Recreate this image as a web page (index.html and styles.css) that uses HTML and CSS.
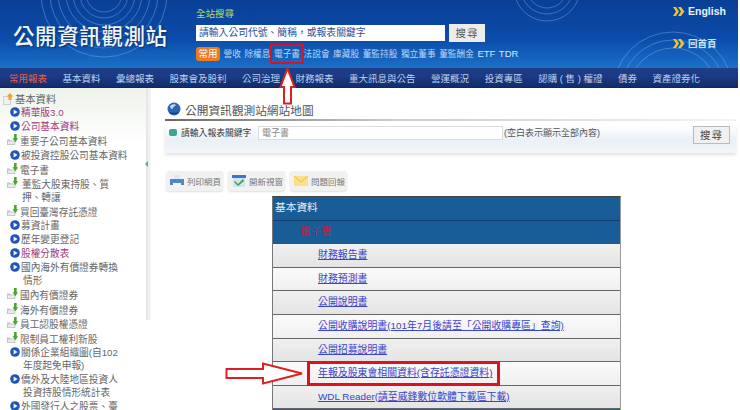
FILE: index.html
```html
<!DOCTYPE html>
<html lang="zh-Hant">
<head>
<meta charset="utf-8">
<title>公開資訊觀測站</title>
<link rel="stylesheet" href="styles.css">
</head>
<body>
<svg class="defs" width="0" height="0" aria-hidden="true">
  <symbol id="bullet" viewBox="0 0 10 10">
    <circle cx="5" cy="5" r="4.800" fill="#1f55b8"/>
    <path d="M3.600 2.400l4 2.600-4 2.600z" fill="#f4f8ff"/>
  </symbol>
  <symbol id="folder" viewBox="0 0 14 13">
    <path d="M0 6h3l1 1h5v5H0z" fill="#bfc6c6"/>
    <path d="M1 8h7v3H1z" fill="#e9ebeb"/>
    <path d="M7.600 0h2.800v4.500H12L9 9 6 4.500h1.600z" fill="#4aa52e"/>
  </symbol>
  <symbol id="root" viewBox="0 0 11 13">
    <path d="M0 3h8v9H0z" fill="#cdd3d3"/>
    <path d="M1 4h6v7H1z" fill="#f0f1ee"/>
    <path d="M7 0l3.500 3.500H8.500V7h-3V3.500H3.500z" fill="#eda52d"/>
  </symbol>
  <symbol id="chev" viewBox="0 0 12 9">
    <path d="M0 0h3l3 4.500L3 9H0l3-4.500z M5 0h3l3.500 4.500L8 9H5l3-4.500z" fill="#f1c232"/>
  </symbol>
</svg>
<header class="top">
  <svg class="swirl" width="740" height="68" aria-hidden="true">
    <g fill="none" stroke="#8dbbec" stroke-opacity=".4">
      <circle cx="104" cy="-6" r="18"/><circle cx="104" cy="-6" r="24"/><circle cx="104" cy="-6" r="31"/><circle cx="104" cy="-6" r="38"/><circle cx="104" cy="-6" r="46"/><circle cx="104" cy="-6" r="54"/><circle cx="104" cy="-6" r="63"/>
      <circle cx="547" cy="-12" r="20"/><circle cx="547" cy="-12" r="26"/><circle cx="547" cy="-12" r="33"/>
      <circle cx="673" cy="92" r="44"/><circle cx="673" cy="92" r="52"/><circle cx="673" cy="92" r="60"/>
    </g>
  </svg>
  <div class="brand">公開資訊觀測站</div>
  <div class="site-search">
    <div class="search-label">全站搜尋</div>
    <div class="search-row">
      <div class="search-input">請輸入公司代號、簡稱，或報表關鍵字</div>
      <div class="search-btn">搜尋</div>
    </div>
    <div class="quick">
      <span class="badge">常用</span>
      <span>營收</span><span>除權息</span><span>電子書</span><span>法說會</span><span>庫藏股</span><span>董監持股</span><span>獨立董事</span><span>董監酬金</span><span class="latin">ETF</span><span class="latin">TDR</span>
    </div>
  </div>
  <div class="top-links">
    <div class="top-link english"><svg class="chev"><use href="#chev"/></svg>English</div>
    <div class="top-link"><svg class="chev"><use href="#chev"/></svg>回首頁</div>
  </div>
</header>
<nav class="nav">
  <span class="nav-on">常用報表</span><span>基本資料</span><span>彙總報表</span><span>股東會及股利</span><span>公司治理</span><span>財務報表</span><span>重大訊息與公告</span><span>營運概況</span><span>投資專區</span><span>認購 ( 售 ) 權證</span><span>債券</span><span>資產證券化</span>
</nav>
<div class="body">
  <aside class="side">
    <div class="tree-root"><svg class="ic-root"><use href="#root"/></svg>基本資料</div>
    <div class="t b v"><svg class="ic"><use href="#bullet"/></svg><span>精華版3.0</span></div>
    <div class="t b v"><svg class="ic"><use href="#bullet"/></svg><span>公司基本資料</span></div>
    <div class="t f"><svg class="ic-f"><use href="#folder"/></svg><span>重要子公司基本資料</span></div>
    <div class="t b"><svg class="ic"><use href="#bullet"/></svg><span>被投資控股公司基本資料</span></div>
    <div class="t f"><svg class="ic-f"><use href="#folder"/></svg><span>電子書</span></div>
    <div class="t f"><svg class="ic-f"><use href="#folder"/></svg><span class="ind">董監大股東持股、質<br>押、轉讓</span></div>
    <div class="t f"><svg class="ic-f"><use href="#folder"/></svg><span>買回臺灣存託憑證</span></div>
    <div class="t b"><svg class="ic"><use href="#bullet"/></svg><span>募資計畫</span></div>
    <div class="t b"><svg class="ic"><use href="#bullet"/></svg><span>歷年變更登記</span></div>
    <div class="t b v"><svg class="ic"><use href="#bullet"/></svg><span>股權分散表</span></div>
    <div class="t b"><svg class="ic"><use href="#bullet"/></svg><span>國內海外有價證券轉換<br><span class="cont">情形</span></span></div>
    <div class="t f"><svg class="ic-f"><use href="#folder"/></svg><span>國內有價證券</span></div>
    <div class="t f"><svg class="ic-f"><use href="#folder"/></svg><span>海外有價證券</span></div>
    <div class="t f"><svg class="ic-f"><use href="#folder"/></svg><span>員工認股權憑證</span></div>
    <div class="t f"><svg class="ic-f"><use href="#folder"/></svg><span>限制員工權利新股</span></div>
    <div class="t b"><svg class="ic"><use href="#bullet"/></svg><span>關係企業組織圖(自102<br><span class="cont">年度起免申報)</span></span></div>
    <div class="t b"><svg class="ic"><use href="#bullet"/></svg><span>僑外及大陸地區投資人<br><span class="cont">投資持股情形統計表</span></span></div>
    <div class="t b"><svg class="ic"><use href="#bullet"/></svg><span>外國發行人之股票、臺</span></div>
  </aside>
  <div class="split"></div>
  <main class="main">
    <div class="title">
      <svg class="globe" viewBox="0 0 14 14" aria-hidden="true">
        <circle cx="7" cy="7" r="6.500" fill="#2b63b5"/>
        <path d="M3 4c2-2 5-2 6-1-1 2-3 1-3 3S3 7 3 4z" fill="#bcd7f2"/>
        <path d="M2 10c3 3 8 3 10 0-3 1-7 1-10 0z" fill="#0f3d86"/>
      </svg>
      <span>公開資訊觀測站網站地圖</span>
    </div>
    <div class="filter">
      <span class="filter-dot"></span>
      <span class="filter-label">請輸入報表關鍵字</span>
      <div class="filter-input">電子書</div>
      <span class="filter-note">(空白表示顯示全部內容)</span>
      <div class="filter-btn">搜尋</div>
    </div>
    <div class="tools">
      <div class="tool">
        <svg viewBox="0 0 14 12" aria-hidden="true"><path d="M4 0h6v4H4z" fill="#dfe8f5"/><path d="M0 4h14v6H0z" fill="#4f86cf"/><path d="M3 8h8v4H3z" fill="#f4f6fa"/></svg>
        <span>列印網頁</span>
      </div>
      <div class="tool">
        <svg viewBox="0 0 14 12" aria-hidden="true"><path d="M0 0h14v3H0z" fill="#3c78c8"/><path d="M1 3h12v9H1z" fill="#cfe3f5"/><path d="M3 6l3 3 5-5 1 2-6 5-4-4z" fill="#3da63a"/></svg>
        <span>開新視窗</span>
      </div>
      <div class="tool">
        <svg viewBox="0 0 14 12" aria-hidden="true"><path d="M0 1h14v10H0z" fill="#fbe08a"/><path d="M0 1l7 6 7-6" fill="none" stroke="#f2bd3e"/></svg>
        <span>問題回報</span>
      </div>
    </div>
    <div class="sitemap">
      <div class="row head">基本資料</div>
      <div class="row sub">電子書</div>
      <div class="row odd"><a>財務報告書</a></div>
      <div class="row even"><a>財務預測書</a></div>
      <div class="row odd"><a>公開說明書</a></div>
      <div class="row even"><a>公開收購說明書(101年7月後請至「公開收購專區」查詢)</a></div>
      <div class="row odd"><a>公開招募說明書</a></div>
      <div class="row even"><a>年報及股東會相關資料(含存託憑證資料)</a></div>
      <div class="row odd"><a>WDL Reader(請至威鋒數位軟體下載區下載)</a></div>
      <div class="row foot"></div>
    </div>
  </main>
</div>
<div class="mark-box quick-box"></div>
<div class="mark-box report-box"></div>
<svg class="arrow-up" viewBox="0 0 17 38" aria-hidden="true"><path d="M8.500 1.500L15.500 20H12V36.500H5V20H1.500z" fill="#fff" stroke="#e02020" stroke-width="2"/></svg>
<svg class="arrow-right" viewBox="0 0 80 23" aria-hidden="true"><path d="M1.500 7H38V1.500L77 11.500 38 21.500V16H1.500z" fill="#fff" stroke="#e02020" stroke-width="2"/></svg>
</body>
</html>
```
FILE: styles.css
```css
* { box-sizing: border-box; }
html, body { margin: 0; height: 410px; overflow: hidden; background: #fff; }
body { position: relative; width: 740px; font-family: "Liberation Sans", "Noto Sans CJK TC", sans-serif; color: #444; }
.defs { position: absolute; }

.top { position: relative; width: 738px; height: 68px; padding: 0 0 0 13px; display: flex; background: linear-gradient(180deg, #0a3f96 0, #0b4ba8 55%, #1a70c8 100%); overflow: hidden; }
.swirl { position: absolute; left: 0; top: 0; }
.brand { position: relative; z-index: 1; width: 183px; margin-top: 24px; font-size: 21.500px; line-height: 26px; letter-spacing: .6px; font-weight: 500; color: #f2f5f8; text-shadow: 1px 1px 2px #0a2f66; white-space: nowrap; }
.site-search { position: relative; z-index: 1; width: 440px; }
.search-label { margin-top: 8px; height: 17px; font-size: 9.500px; line-height: 11px; color: #bcdc62; }
.search-row { display: flex; gap: 4px; }
.search-input { width: 249px; height: 16px; background: #fff; font-size: 9.800px; line-height: 16px; padding-left: 3px; color: #2c4f9c; white-space: nowrap; }
.search-btn { width: 36px; height: 18px; margin-top: -1px; background: #ececec; color: #555; text-align: center; font-size: 10.500px; line-height: 18px; letter-spacing: 1px; }
.quick { display: flex; align-items: center; gap: 3.500px; margin-top: 5px; font-size: 8.700px; line-height: 14px; color: #b7d6f6; white-space: nowrap; }
.latin { font-size: 9.500px; color: #d6e8fa; }
.badge { width: 24px; height: 14px; background: #ee7a1f; color: #fff; border-radius: 3px; text-align: center; font-size: 9.500px; }
.top-links { position: absolute; z-index: 1; left: 673px; top: 5px; display: flex; flex-direction: column; gap: 20px; }
.top-link { display: flex; align-items: center; gap: 2px; height: 12px; font-size: 9.500px; font-weight: 700; color: #c8e2fa; white-space: nowrap; }
.english { font-size: 10.500px; color: #e8f3fd; }
.chev { width: 12px; height: 9px; margin-right: 1px; }

.nav { width: 738px; height: 20px; display: flex; gap: 15.500px; padding-left: 9px; align-items: center; background: linear-gradient(180deg, #1e3f86 0, #1a3a84 45%, #132c6c 100%); color: #bcd0ec; font-size: 9.500px; white-space: nowrap; border-bottom: 1px solid #12275e; }
.nav-on { color: #e0604a; }

.body { display: flex; height: 322px; }
.side { width: 146px; padding: 4px 0 0 3px; font-size: 9.700px; line-height: 13px; color: #666; background: linear-gradient(180deg, #eef3ea 0, #fff 55px); }
.tree-root { display: flex; align-items: center; height: 14px; font-size: 10.300px; }
.ic-root { width: 11px; height: 13px; margin-right: 1px; }
.t { display: flex; }
.t.b { padding: 0 0 .5px 7px; margin-bottom: .5px; }
.t.f { padding: 1px 0 .5px 5px; }
.t > span { flex: 1; white-space: nowrap; }
.v { color: #a03a82; }
.ic { width: 10px; height: 10px; flex: none; margin: 1px 1px 0 0; }
.ic-f { width: 13px; height: 12px; flex: none; margin: -1px 0 0 -1px; }
.ind { padding-left: 2px; }
.cont { padding-left: 2px; }
.split { position: relative; width: 5px; height: 232px; margin-right: 14px; background: linear-gradient(90deg, #e4e4e4, #f8f8f8); }
.split::after { content: ""; position: absolute; left: -1px; top: 73px; border: 3px solid transparent; border-left-width: 0; border-right: 3px solid #4aa8b8; }

.main { width: 571px; }
.title { display: flex; align-items: flex-end; gap: 4px; height: 33px; padding-left: 2px; border-bottom: 2px solid; border-image: linear-gradient(90deg, #666, #ccc 40%, #f4f4f4) 1; font-size: 11.700px; line-height: 17px; color: #555; }
.globe { width: 14px; height: 14px; margin-bottom: 3px; }
.filter { display: flex; align-items: flex-start; height: 28px; margin-top: 4px; padding: 1px 6px 0 4px; background: linear-gradient(180deg, #fff 0, #eaf0f7 55%, #f4f6f9 100%); box-shadow: 0 2px 3px #e2e2e2; font-size: 9px; line-height: 14px; color: #555; }
.filter-dot { width: 8px; height: 7px; margin: 3px 4px 0 0; background: #3aa795; border-radius: 2px; }
.filter-label { width: 77px; font-size: 8.800px; color: #333; white-space: nowrap; }
.filter-input { width: 245px; height: 14px; padding-left: 3px; background: #fff; border: 1px solid #dcdcdc; line-height: 12px; color: #888; }
.filter-note { flex: 1; padding-left: 1px; white-space: nowrap; }
.filter-btn { width: 37px; height: 18px; background: #f0f0f0; border: 1px solid #bbb; text-align: center; font-size: 10.500px; line-height: 16px; letter-spacing: 1px; color: #444; }
.tools { display: flex; gap: 5px; height: 20px; margin: 18px 0 5px 1px; }
.tool { display: flex; align-items: center; gap: 3px; width: 57px; padding-left: 4px; background: #f1f1ef; border-radius: 3px; box-shadow: 0 1px 2px #ddd; font-size: 8.500px; color: #777; white-space: nowrap; }
.tool svg { width: 14px; height: 12px; flex: none; }

.sitemap { width: 349px; margin-left: 107px; border-left: 1px solid #777; border-right: 1px solid #999; border-top: 1px solid #444; font-size: 9.900px; }
.row { height: 23.600px; padding-left: 45px; line-height: 21px; white-space: nowrap; border-bottom: 1px solid #666; }
.row a { color: #3a44cc; text-decoration: underline; }
.head { padding-left: 2px; background: #185c98; color: #e8eef4; font-size: 10.700px; border-bottom-color: #123f6c; }
.sub { padding-left: 27px; background: #185c98; color: #c81e3c; font-size: 10.500px; border-bottom: 0; }
.odd { background: linear-gradient(180deg, #f0f0f0, #e4e4e4); }
.even { background: linear-gradient(180deg, #fafafa, #f0f0f0); }
.foot { height: 4px; background: #185c98; border: 0; }

.mark-box { position: absolute; border: 3px solid #e0101e; }
.quick-box { left: 270px; top: 44px; width: 34px; height: 20px; border-width: 2px; }
.report-box { left: 307px; top: 361px; width: 193px; height: 25px; }
.arrow-up { position: absolute; left: 279px; top: 67px; width: 17px; height: 38px; }
.arrow-right { position: absolute; left: 225px; top: 362px; width: 80px; height: 23px; }
```
